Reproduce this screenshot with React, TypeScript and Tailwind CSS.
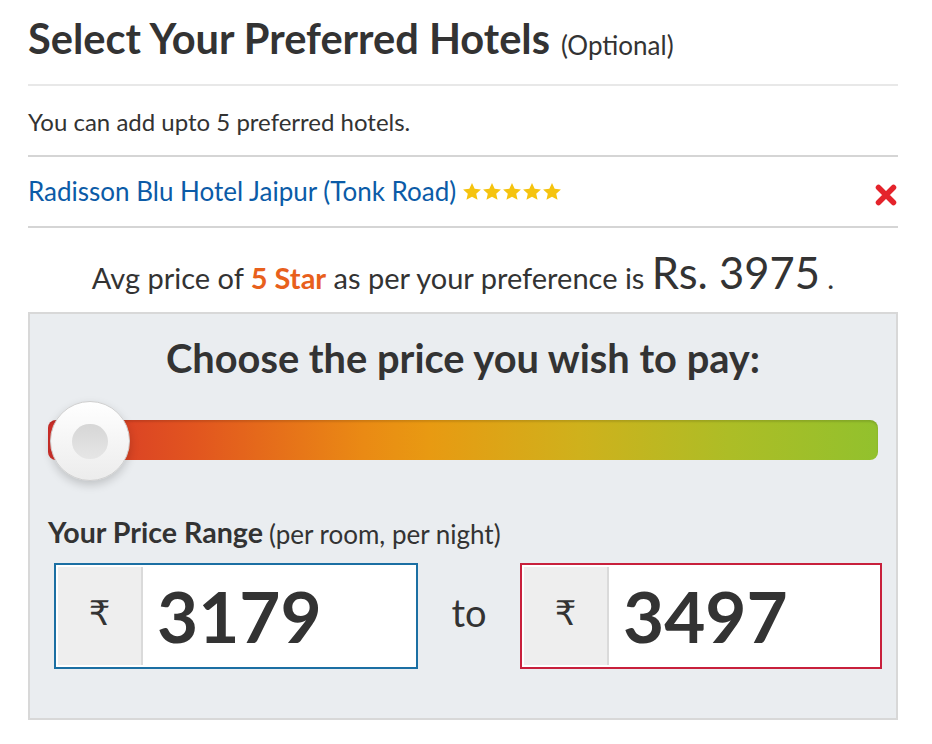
import React from "react";

function Star() {
  return (
    <svg width="20" height="19" viewBox="0 0 24 23" className="shrink-0">
      <path
        d="M12 1.2l3.2 7 7.6.8-5.7 5.1 1.6 7.5L12 17.8l-6.7 3.8 1.6-7.5L1.2 9l7.6-.8z"
        fill="#f5c30f"
      />
    </svg>
  );
}

function PriceBox({ value, border, w }: { value: string; border: string; w: string }) {
  return (
    <div className={`flex h-[106px] ${w} shrink-0 border-2 ${border} bg-white p-[2px]`}>
      <div className="flex w-[85px] items-center justify-center border-r-2 border-[#dadada] bg-[#eeeeee] pb-[4px] text-[34px] text-[#333] font-['DejaVu_Sans',sans-serif]">
        ₹
      </div>
      <div className="flex items-center pl-[14px] text-[71px] font-bold leading-none text-[#333]">
        {value}
      </div>
    </div>
  );
}

export default function App() {
  return (
    <div className="h-[744px] w-[932px] bg-white font-['Lato',sans-serif] text-[#333]">
      <div className="ml-[28px] w-[870px]">
        <div className="flex h-[84px] items-end pb-[24px]">
          <span className="text-[41.6px] font-bold leading-none">
            Select Your Preferred Hotels
          </span>
          <span className="ml-[11px] pb-[2px] text-[26px] leading-none">(Optional)</span>
        </div>
        <div className="h-[2px] bg-[#e8e8e8]" />
        <div className="flex h-[69px] items-center pt-[2px] text-[24px]">
          You can add upto 5 preferred hotels.
        </div>
        <div className="h-[2px] bg-[#d5d5d5]" />
        <div className="flex h-[69px] items-center justify-between">
          <div className="flex items-center">
            <span className="text-[26px] text-[#0b5ba7]">
              Radisson Blu Hotel Jaipur (Tonk Road)
            </span>
            <div className="ml-[6px] flex">
              <Star />
              <Star />
              <Star />
              <Star />
              <Star />
            </div>
          </div>
          <svg width="24" height="24" viewBox="0 0 24 24" className="mt-[6px]">
            <path
              d="M4.5 4.5L19.5 19.5M19.5 4.5L4.5 19.5"
              stroke="#e4232b"
              strokeWidth="5.5"
              strokeLinecap="round"
            />
          </svg>
        </div>
        <div className="h-[2px] bg-[#d5d5d5]" />
        <div className="flex h-[84px] items-end justify-center pb-[18px]">
          <span className="text-[29px] leading-none">
            Avg price of <span className="font-bold text-[#e8601c]">5 Star</span> as per your
            preference is <span className="text-[43.5px] leading-none">Rs. 3975</span> .
          </span>
        </div>
        <div className="h-[408px] border-2 border-[#d8d8d8] bg-[#eaedf0] pl-[18px] pr-[14px]">
          <div className="flex h-[88px] w-[830px] items-start justify-center pt-[24px] text-[39.8px] font-bold leading-none">
            Choose the price you wish to pay:
          </div>
          <div className="relative mt-[18px] h-[40px] w-[830px] rounded-[8px] bg-[linear-gradient(to_right,#d4302b_0%,#e2561f_18%,#ea8a14_38%,#e89a12_46%,#cfb11c_64%,#adbd26_82%,#92c12d_100%)] shadow-[inset_0_2px_2px_rgba(0,0,0,0.12)]">
            <div className="absolute left-[2px] top-[-19px] flex h-[80px] w-[80px] items-center justify-center rounded-full border border-[#cfcfcf] bg-[linear-gradient(to_bottom,#ffffff,#ececec)] shadow-[0_4px_10px_rgba(0,0,0,0.18)]">
              <div className="h-[35px] w-[36px] rounded-full bg-[linear-gradient(to_bottom,#d6d6d6,#e6e6e6)]" />
            </div>
          </div>
          <div className="mt-[58px] flex items-end">
            <span className="text-[28.6px] font-bold leading-none">Your Price Range</span>
            <span className="ml-[6px] text-[26px] leading-none">(per room, per night)</span>
          </div>
          <div className="mt-[16px] flex items-center pl-[6px]">
            <PriceBox value="3179" border="border-[#1b6fa3]" w="w-[364px]" />
            <div className="flex w-[102px] shrink-0 justify-center pb-[6px] text-[38px]">to</div>
            <PriceBox value="3497" border="border-[#c8203c]" w="w-[362px]" />
          </div>
        </div>
      </div>
    </div>
  );
}
